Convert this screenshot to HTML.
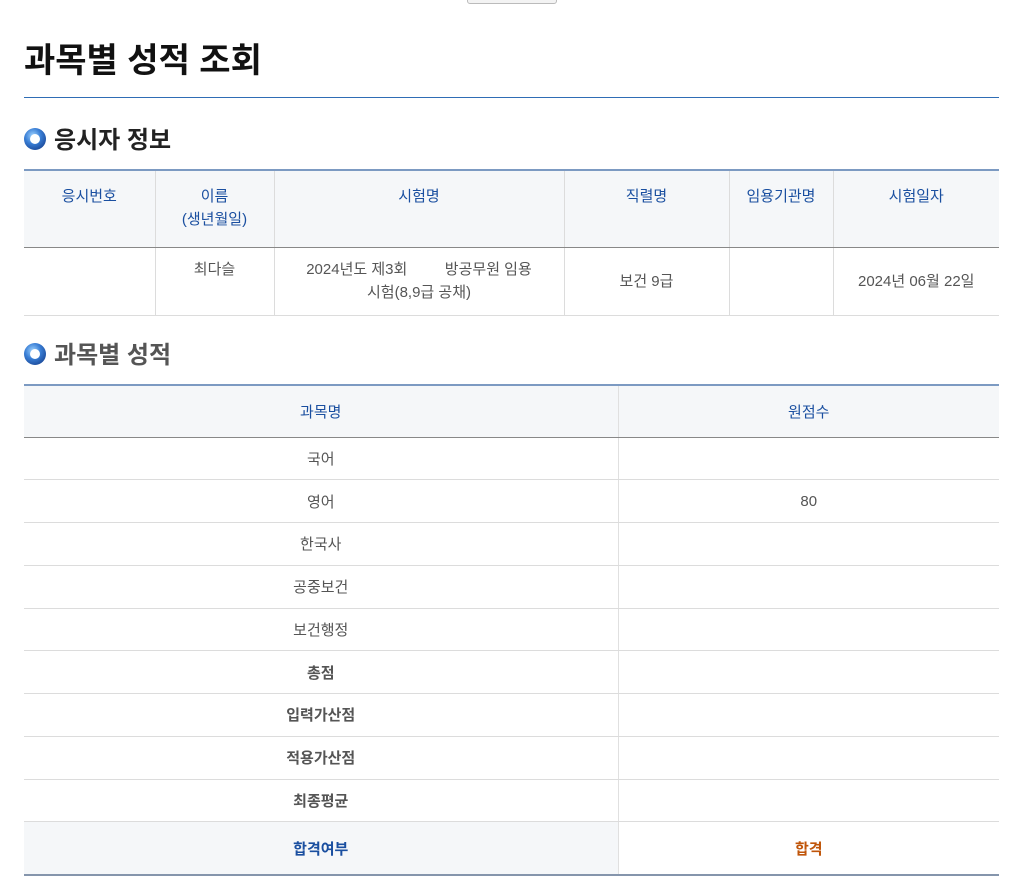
<!DOCTYPE html>
<html><head><meta charset="utf-8"><style>
*{margin:0;padding:0;box-sizing:border-box}
body{width:1016px;height:880px;background:#fff;font-family:"Liberation Sans","Noto Sans CJK KR",sans-serif;position:relative;overflow:hidden;color:#555}
.a{position:absolute}
h1{position:absolute;left:24px;top:33px;font-size:34px;font-weight:bold;color:#111;letter-spacing:0px}
.hr{left:24px;top:97px;width:975px;height:1px;background:#2f6db5}
.ico{width:22px;height:22px;border-radius:50%;background:radial-gradient(circle at 40% 35%,#9fd3ff 0,#3a7fd6 40%,#0b2e7a 100%)}
.ico::after{content:"";position:absolute;left:6px;top:6px;width:10px;height:10px;border-radius:50%;background:#fff}
.sec{font-size:24px;font-weight:bold;color:#222}
table{position:absolute;border-collapse:collapse;font-size:15px;table-layout:fixed}
td,th{text-align:center;color:#555;font-weight:normal}
th{color:#1a4fa0;background:#f5f7f9}
.t1{left:24px;top:169px;width:975px;border-top:2px solid #7c9ac2}
.t1 th{height:77px;vertical-align:top;padding-top:14px;line-height:23px;border-left:1px solid #dcdcdc;border-bottom:1px solid #888}
.t1 td{height:68px;line-height:23px;border-left:1px solid #dcdcdc;border-bottom:1px solid #dcdcdc;vertical-align:middle}
.t1 tr>*:first-child{border-left:none}
.t2{left:24px;top:384px;width:975px;border-top:2px solid #7c9ac2}
.t2 th{height:52px;border-bottom:1px solid #888}
.t2 th+th{border-left:1px solid #e0e0e0}
.t2 td{height:42.75px;border-bottom:1px solid #dcdcdc}
.t2 td+td{border-left:1px solid #e0e0e0}
.t2 tr.last td{height:53px;border-bottom:2px solid #8595ac}
</style></head><body>
<div class="a" style="left:467px;top:-6px;width:90px;height:10px;border:1px solid #bbb;border-radius:3px;background:#f3f3f3"></div>
<h1>과목별 성적 조회</h1>
<div class="a hr"></div>
<div class="a ico" style="left:24px;top:128px"></div>
<div class="a sec" style="left:54px;top:120px">응시자 정보</div>
<table class="t1">
<colgroup><col style="width:131px"><col style="width:119px"><col style="width:290px"><col style="width:165px"><col style="width:104px"><col style="width:166px"></colgroup>
<tr><th>응시번호</th><th>이름<br>(생년월일)</th><th>시험명</th><th>직렬명</th><th>임용기관명</th><th>시험일자</th></tr>
<tr><td></td><td style="vertical-align:top;padding-top:10px">최다슬</td><td>2024년도 제3회 &nbsp; &nbsp; &nbsp; &nbsp; 방공무원 임용<br>시험(8,9급 공채)</td><td>보건 9급</td><td></td><td>2024년 06월 22일</td></tr>
</table>
<div class="a ico" style="left:24px;top:343px"></div>
<div class="a sec" style="left:54px;top:335px;color:#555">과목별 성적</div>
<table class="t2">
<colgroup><col style="width:594px"><col style="width:381px"></colgroup>
<tr><th>과목명</th><th>원점수</th></tr>
<tr><td>국어</td><td></td></tr>
<tr><td>영어</td><td>80</td></tr>
<tr><td>한국사</td><td></td></tr>
<tr><td>공중보건</td><td></td></tr>
<tr><td>보건행정</td><td></td></tr>
<tr><td style="font-weight:bold">총점</td><td></td></tr>
<tr><td style="font-weight:bold">입력가산점</td><td></td></tr>
<tr><td style="font-weight:bold">적용가산점</td><td></td></tr>
<tr><td style="font-weight:bold">최종평균</td><td></td></tr>
<tr class="last"><td style="background:#f5f7f9;color:#1a4fa0;font-weight:bold">합격여부</td><td style="color:#c0550a;font-weight:bold">합격</td></tr>
</table>
</body></html>
